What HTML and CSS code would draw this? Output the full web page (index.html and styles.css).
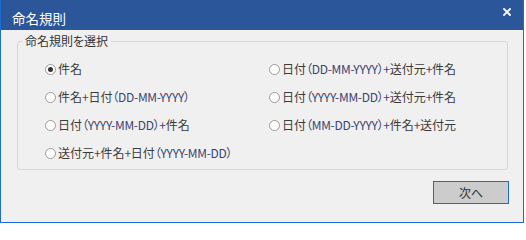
FILE: index.html
```html
<!DOCTYPE html>
<html lang="ja">
<head>
<meta charset="utf-8">
<title>命名規則</title>
<link rel="stylesheet" href="styles.css">
</head>
<body>
<div class="window">
  <div class="titlebar">
    <span class="title">命名規則</span>
    <span class="close" aria-label="閉じる">
      <svg width="8" height="8" viewBox="0 0 8 8"><path d="M1 1 L7 7 M7 1 L1 7" stroke="#fff" stroke-width="1.8" stroke-linecap="square"/></svg>
    </span>
  </div>
  <div class="content">
    <fieldset class="group">
      <legend class="legend">命名規則を選択</legend>
      <div class="options">
        <label class="opt"><span class="radio checked"></span><span class="lbl">件名</span></label>
        <label class="opt"><span class="radio"></span><span class="lbl">日付<span class="fmt">（DD-MM-YYYY）+</span>送付元<span class="fmt">+</span>件名</span></label>
        <label class="opt"><span class="radio"></span><span class="lbl">件名<span class="fmt">+</span>日付<span class="fmt">（DD-MM-YYYY）</span></span></label>
        <label class="opt"><span class="radio"></span><span class="lbl">日付<span class="fmt">（YYYY-MM-DD）+</span>送付元<span class="fmt">+</span>件名</span></label>
        <label class="opt"><span class="radio"></span><span class="lbl">日付<span class="fmt">（YYYY-MM-DD）+</span>件名</span></label>
        <label class="opt"><span class="radio"></span><span class="lbl">日付<span class="fmt">（MM-DD-YYYY）+</span>件名<span class="fmt">+</span>送付元</span></label>
        <label class="opt"><span class="radio"></span><span class="lbl">送付元<span class="fmt">+</span>件名<span class="fmt">+</span>日付<span class="fmt">（YYYY-MM-DD）</span></span></label>
      </div>
    </fieldset>
    <div class="actions">
      <button class="btn">次へ</button>
    </div>
  </div>
</div>
</body>
</html>
```

FILE: styles.css
```css
html, body {
  margin: 0;
  padding: 0;
}
body {
  background: #ffffff;
  width: 526px;
  height: 224px;
  overflow: hidden;
  font-family: "Noto Sans CJK JP", "Noto Sans", sans-serif;
  font-feature-settings: "palt";
}
.window {
  box-sizing: border-box;
  width: 524px;
  height: 223px;
  border: 1px solid #1a6cd4;
  background: #f0f0f0;
  display: flex;
  flex-direction: column;
}
.titlebar {
  box-sizing: border-box;
  height: 30px;
  margin-top: -1px;
  background: #2b579a;
  display: flex;
  align-items: flex-start;
  padding: 10px 12px 0 11px;
  flex: none;
}
.title {
  color: #ffffff;
  font-size: 13.5px;
  line-height: 16px;
}
.close {
  margin-left: auto;
  margin-top: -2px;
  width: 8px;
  height: 8px;
  display: flex;
}
.content {
  flex: 1;
  display: flex;
  flex-direction: column;
  padding: 0 15px 0 16px;
}
.group {
  margin: 4px 0 0 0;
  padding: 7px 0 2px 0;
  border: 1px solid #d5d5d5;
  border-radius: 3px;
  min-width: 0;
}
.legend {
  font-size: 12px;
  line-height: 14px;
  color: #333333;
  padding: 0 3px;
  margin-left: 4px;
}
.options {
  display: grid;
  grid-template-columns: 224px 1fr;
  grid-auto-rows: 28px;
  padding-left: 27px;
}
.opt {
  display: flex;
  align-items: center;
  gap: 2px;
  font-size: 12px;
  color: #3a3a3a;
  white-space: nowrap;
}
.radio {
  box-sizing: border-box;
  width: 11px;
  height: 11px;
  border: 1px solid #9a9a9a;
  border-radius: 50%;
  background: #ffffff;
  display: flex;
  align-items: center;
  justify-content: center;
  flex: none;
}
.radio.checked::after {
  content: "";
  width: 5px;
  height: 5px;
  border-radius: 50%;
  background: #333333;
}
.lbl {
  line-height: 14px;
}
.fmt {
  letter-spacing: -0.3px;
  color: #3b4470;
}
.actions {
  display: flex;
  justify-content: flex-end;
  margin-top: 11px;
  margin-right: -1px;
}
.btn {
  box-sizing: border-box;
  width: 76px;
  height: 23px;
  border: 1px solid #1a6cd4;
  background: #cccccc;
  color: #333333;
  font-family: "Noto Sans CJK JP", sans-serif;
  font-size: 12px;
  padding: 0;
  margin: 0;
}
```
